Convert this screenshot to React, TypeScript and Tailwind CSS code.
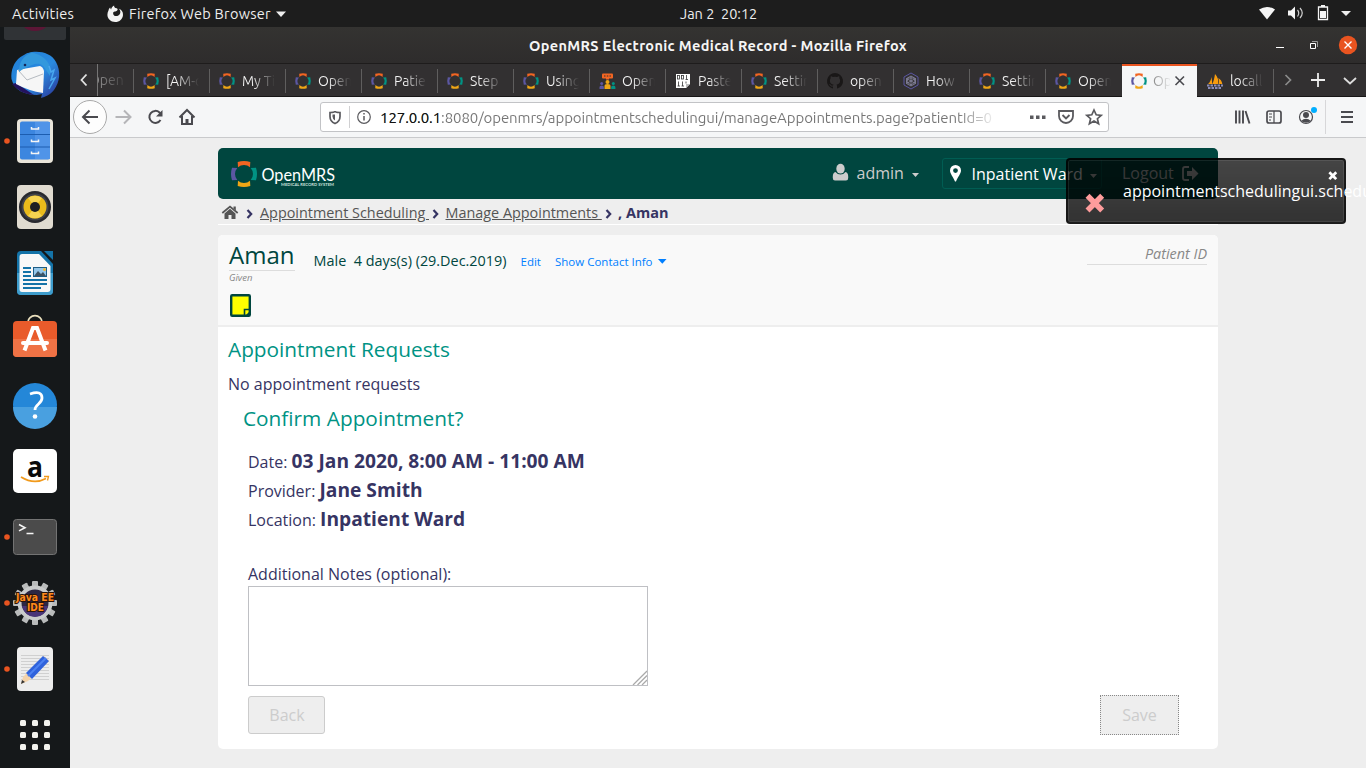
import React from "react";

type PicProps = { x: number; y: number; w: number; h: number; children: React.ReactNode; className?: string };

// An svg whose user units are window coordinates, so neighbouring icons share one grid.
function Pic({ x, y, w, h, children, className = "" }: PicProps) {
  return (
    <svg width={w} height={h} viewBox={`${x} ${y} ${w} ${h}`} className={`block shrink-0 ${className}`} fill="none">
      {children}
    </svg>
  );
}

const petal = "M-6 -6.700L-6.300 -12Q0 -14 6.300 -12L6 -6.700A9 9 0 0 0 -6 -6.700z";

function Ring({ cx, cy, scale = 1 }: { cx: number; cy: number; scale?: number }) {
  return (
    <g transform={`translate(${cx} ${cy}) scale(${scale})`}>
      <path d={petal} fill="#f26522" />
      <path d={petal} fill="#009384" transform="rotate(90)" />
      <path d={petal} fill="#eea616" transform="rotate(180)" />
      <path d={petal} fill="#5b57a2" transform="rotate(270)" />
    </g>
  );
}

function Favicon({ kind }: { kind: string }) {
  return (
    <Pic x={0} y={0} w={18} h={18}>
      {kind === "ring" && <Ring cx={9} cy={9} scale={0.6} />}
      {kind === "talk" && (
        <g>
          <rect x="4" y="1.500" width="11" height="5" rx="1" fill="#f26522" />
          <path d="M6 4h1.500M8.800 4h1.500M11.500 4H13" stroke="#323031" />
          <path d="M8 6h3v1.500H8z" fill="#f26522" />
          <circle cx="9.500" cy="10" r="2" fill="#eea616" />
          <path d="M6.500 17v-3q0-2 3-2t3 2v3z" fill="#eea616" />
          <circle cx="3.700" cy="11.500" r="1.500" fill="#5b57a2" />
          <path d="M1.500 17v-2q0-1.500 2.200-1.500t2.200 1.500v2z" fill="#5b57a2" />
          <circle cx="15.300" cy="11.500" r="1.500" fill="#009384" />
          <path d="M13.200 17v-2q0-1.500 2.100-1.500t2.100 1.500v2z" fill="#009384" />
        </g>
      )}
      {kind === "paste" && (
        <g>
          <path d="M2 2h14v10l-4 4H2z" fill="#fff" />
          <path d="M12 16v-4h4z" fill="#bbb" />
          <g stroke="#333" strokeWidth=".8">
            <rect x="3.500" y="3.500" width="2" height="3.500" />
            <rect x="7.500" y="3.500" width="2" height="3.500" />
            <path d="M12.500 3v4.500M11.500 7.500h2.500M4.500 9.500v4.500M3.500 14H6M8.500 9.500v4.500M7.500 14H10M12 9.500v2" />
          </g>
        </g>
      )}
      {kind === "github" && (
        <path
          d="M9 1a8 8 0 0 0-2.500 15.600c.4 0 .5-.2.5-.5v-1.500c-2.200.5-2.700-1-2.700-1-.4-.9-.9-1.200-.9-1.200-.7-.5 0-.5 0-.5.8.1 1.300.9 1.300.9.700 1.200 1.900.9 2.400.7 0-.5.3-.9.500-1.100-1.800-.2-3.700-.9-3.700-4 0-.9.300-1.600.8-2.100 0-.2-.3-1 .1-2.100 0 0 .7-.2 2.200.8a8 8 0 0 1 4 0c1.500-1 2.200-.8 2.200-.8.4 1.100.1 1.900.1 2.100.5.500.8 1.200.8 2.100 0 3.100-1.900 3.800-3.700 4 .3.200.600.7.600 1.500v2.200c0 .3.1.5.5.5A8 8 0 0 0 9 1z"
          fill="#191717"
        />
      )}
      {kind === "cube" && (
        <g stroke="#5b57a2" strokeWidth="1">
          <path d="M9 1l7 4v8l-7 4-7-4V5z" />
          <path d="M9 4l4.500 2.500v5L9 14l-4.500-2.500v-5zM9 4v10M4.500 6.500l9 5M13.500 6.500l-9 5M6 6l6 0 1 4-4 3-4-3z" stroke="#8b8aa5" strokeWidth=".8" />
        </g>
      )}
      {kind === "pma" && (
        <g>
          <path d="M6.500 12c1-3 2-6 2.500-10q4 4 3 10zM2 12c1.500-1 3-4 3.500-7l.8 7zM12.500 12c.6-2 .5-4-.2-6q3.500 2 4 6z" fill="#f89c0e" />
          <path d="M1 13.500h16M2 16h14" stroke="#8a8cb8" strokeWidth="1.800" strokeDasharray="2.500 1" />
        </g>
      )}
    </Pic>
  );
}

const tabs = [
  ["ring", "[AM-c"], ["ring", "My Ti"], ["ring", "Open"], ["ring", "Patie"], ["ring", "Step"], ["ring", "Using"],
  ["talk", "Open"], ["paste", "Paste"], ["ring", "Settin"], ["github", "open"], ["cube", "How"], ["ring", "Settin"], ["ring", "Open"],
];

function Tab({ kind, label, last = false }: { kind: string; label: string; last?: boolean }) {
  return (
    <div className="flex h-[33px] w-[76px] shrink-0 items-center">
      <div className={`h-6 w-px ${last ? "bg-transparent" : "bg-[#5f5e5e]"}`} />
      <div className="ml-2 w-[18px]"><Favicon kind={kind} /></div>
      <div className="ml-[6px] w-[33px] overflow-hidden whitespace-nowrap bg-linear-to-r from-[#f4f4f4] from-30% to-[#f4f4f4]/0 to-100% bg-clip-text text-[14px] leading-5 tracking-[-0.1px] text-transparent">
        {label}
      </div>
    </div>
  );
}

function TopBar() {
  return (
    <div className="flex h-[27px] shrink-0 items-center bg-[#1d1d1d] text-[14.500px] leading-[26px] text-[#eee]">
      <div className="w-[107px] pl-3 tracking-[0.270px]">Activities</div>
      <Pic x={107} y={4} w={18} h={18}>
        <path d="M108.500 9.500c.2-1.300.9-2.300 1.700-3 .1 1 .4 1.500.9 1.900.3-1.800 1.300-2.900 3-3.900-.1 1.300.4 1.900 1.300 2.600 4.300.6 1.300 3.400 0 3.400-.9 0-1.800.2-2.200.9-.5 1.900.9 3.700 3 3.700 2.600 0 4.400-2 4.100-4.500-.2-1.300-.9-2.300-1.900-3 3.200.9 4.800 3.500 4.600 6.300-.3 4-3.500 7.100-7.800 7.100-4.500 0-7.800-3.300-7.800-7.200 0-1.600.4-3 1.100-4.300z" fill="#f3f3f3" />
      </Pic>
      <div className="ml-[4px] w-[146px] whitespace-nowrap tracking-[0.290px]">Firefox Web Browser</div>
      <Pic x={275} y={8} w={12} h={10}><path d="M276 10.500h10l-5 5.500z" fill="#eee" /></Pic>
      <div className="ml-[393px] w-[120px] whitespace-pre">Jan 2  20:12</div>
      <Pic x={1254} y={4} w={112} h={20} className="ml-auto">
        <path d="M1259 9.500q8-5 16 0l-8 10z" fill="#f5f5f5" />
        <path d="M1288 10.500h3l4-4v13l-4-4h-3z" fill="#f5f5f5" />
        <path d="M1297.500 10q2.500 3 0 6.500M1300 8q4.500 5 0 10" stroke="#ccc" strokeWidth="1.200" />
        <path d="M1318.500 7h9v12.500h-9z" stroke="#f5f5f5" strokeWidth="1.300" />
        <path d="M1321 5h4v2h-4zM1320 11h6v7h-6z" fill="#f5f5f5" />
        <path d="M1341 11h10l-5 5z" fill="#eee" />
      </Pic>
    </div>
  );
}

function Dot({ y }: { y: number }) {
  return <circle cx="7" cy={y} r="2.800" fill="#e95420" />;
}

function DockCell({ y, children }: { y: number; children: React.ReactNode }) {
  return <Pic x={0} y={y - 33} w={70} h={66}>{children}</Pic>;
}

function Dock() {
  const teeth = Array.from({ length: 12 }, (_, i) => i * 30);
  return (
    <div className="flex w-[70px] shrink-0 flex-col bg-[#15181a]">
      <Pic x={0} y={27} w={70} h={15}>
        <rect x="4" y="10" width="62" height="30" rx="2" fill="#303336" />
        <path d="M24 27h22q-4 4-11 4t-11-4z" fill="#5c1636" />
      </Pic>
      <DockCell y={75}>
        <defs>
          <linearGradient id="bird" x1="0" y1="0" x2="1" y2="1">
            <stop offset="0" stopColor="#1f7fd6" /><stop offset=".55" stopColor="#2a8ae0" /><stop offset="1" stopColor="#2b2e91" />
          </linearGradient>
        </defs>
        <path d="M28 53c9-3 23-1 28 9 5 9 4 20-2 28-4 5-9 7-13 8l1-4-5 1C25 95 14 90 11.500 79c-1-8 2-17 9-22 3-2 5-3 7-4z" fill="url(#bird)" />
        <path d="M12 84q8 10 22 11l-18-12z" fill="#24125e" />
        <path d="M17 70l23-4q3 1 4 5l-1 22q-14-2-27-9z" fill="#f6f6f6" />
        <path d="M18 70l9 10 16-6" stroke="#b5bac0" />
        <path d="M29 52c4 1 11 2 16 7 5 5 6 9 5 17l-4-6c-4-7-8-7-14-5-5 2-10 4-13 7 0-10 4-16 12-19z" fill="#3398dd" />
        <path d="M49 66l2 6 3-2-3 10 4-2-6 11" stroke="#49a7ee" strokeWidth="1.500" />
        <circle cx="25" cy="65" r="1.300" fill="#15265a" />
      </DockCell>
      <DockCell y={141}>
        <Dot y={141} />
        <rect x="17" y="119" width="36" height="44" rx="4" fill="#e9e5da" />
        <rect x="20" y="121.500" width="30" height="38" rx="2" fill="#3c86df" />
        <path d="M35 122h15v37H35z" fill="#5094e8" />
        <path d="M20 134.500h30M20 147h30" stroke="#1c5db0" />
        <path d="M31.500 127v2h7v-2M31.500 139.500v2h7v-2M31.500 151.500v2h7v-2" stroke="#f5f5f5" strokeWidth="1.500" />
      </DockCell>
      <DockCell y={207}>
        <rect x="17" y="185" width="36" height="44" rx="4" fill="#e0dbd0" />
        <circle cx="35" cy="207" r="16" fill="#28292e" />
        <circle cx="35" cy="207" r="13.500" fill="#41434a" />
        <circle cx="35" cy="207" r="11.500" fill="#eabb1b" />
        <path d="M35 207l-7-9q7-4.500 14 0zM35 207l-7 9q7 4.500 14 0z" fill="#f6d451" />
        <circle cx="35" cy="207" r="5" fill="#1e2023" />
      </DockCell>
      <DockCell y={273}>
        <path d="M21 251h20l12 13v27q0 4-4 4H21q-4 0-4-4v-36q0-4 4-4z" fill="#1473a8" />
        <path d="M17 273h36v18q0 4-4 4H21q-4 0-4-4z" fill="#3e9ccc" />
        <path d="M22 254h17l11.500 12v23q0 3-3 3H22q-2.500 0-2.500-3v-32q0-3 2.500-3z" fill="#f8f8f8" />
        <path d="M44 251h9v9z" fill="#1473a8" />
        <path d="M23 268h8M23 272h8M23 276h8M23 280h24M23 284h24M23 288h18" stroke="#1473a8" strokeWidth="1.800" />
        <rect x="33.500" y="267.500" width="13" height="9" fill="#94c7ea" stroke="#1e5d85" />
        <path d="M34 276l4-5 3 3 2-2 3 4z" fill="#3d5363" /><circle cx="44.500" cy="269.500" r="1.500" fill="#f4b631" />
      </DockCell>
      <DockCell y={339}>
        <path d="M28 323v-1a7 6.300 0 0 1 14 0v1" stroke="#eadfbd" strokeWidth="1.800" />
        <rect x="13" y="321" width="44" height="36" rx="4" fill="#e95b2b" />
        <path d="M13 339h44v14q0 4-4 4H17q-4 0-4-4z" fill="#ef7245" />
        <path d="M24.500 350.500L33 328h4l8.500 22.500" stroke="#fff" strokeWidth="4" />
        <rect x="21" y="341" width="28" height="4" rx="2" fill="#fff" />
      </DockCell>
      <DockCell y={405}>
        <circle cx="35" cy="405" r="22" fill="#2487d8" />
        <path d="M13 407a22 22 0 0 0 44 0z" fill="#49a0e0" />
        <path d="M30 394q12-4 12 4c0 6-7 6-7 12" stroke="#fff" strokeWidth="2.800" />
        <circle cx="35" cy="416.500" r="2.300" fill="#fff" />
      </DockCell>
      <DockCell y={471}>
        <rect x="13" y="449" width="44" height="44" rx="5" fill="#fff" />
        <text x="27" y="476.500" fontFamily="Open Sans" fontWeight="700" fontSize="29" fill="#0b0b0b" textLength="16" lengthAdjust="spacingAndGlyphs">a</text>
        <path d="M21 477q13 8 25 1.500" stroke="#f19a1c" strokeWidth="1.700" />
        <path d="M44 476.500h4.500l-1 4" stroke="#f19a1c" strokeWidth="1.300" />
      </DockCell>
      <DockCell y={537}>
        <Dot y={537} />
        <rect x="13.500" y="519.500" width="43" height="35" rx="3" fill="#4b4b4b" stroke="#737373" />
        <path d="M19 524.500l6 3.200-6 3.200M26.500 533.500h7" stroke="#f5f5f5" strokeWidth="1.600" />
      </DockCell>
      <DockCell y={603}>
        <Dot y={603} />
        <g fill="#b9bbbb">
          {teeth.map((a) => <rect key={a} x="32" y="581" width="6" height="9" rx="1" transform={`rotate(${a} 35 603)`} />)}
        </g>
        <circle cx="35" cy="603" r="15.500" stroke="#c9cbcb" strokeWidth="4" fill="#2c2643" />
        <path d="M22 606h26q-3 11-13 11t-13-11z" fill="#493478" />
        <g fontFamily="DejaVu Sans" fontWeight="700" fontSize="10" fill="#ff8a1c" stroke="#29130a" strokeWidth="2" paintOrder="stroke">
          <text x="16" y="601" textLength="38" lengthAdjust="spacingAndGlyphs">Java EE</text>
          <text x="27" y="611" textLength="17" lengthAdjust="spacingAndGlyphs">IDE</text>
        </g>
      </DockCell>
      <DockCell y={669}>
        <Dot y={669} />
        <rect x="17" y="647" width="36" height="44" rx="4" fill="#ededed" />
        <path d="M21 655.500h28M21 658.500h28M21 661.500h28M21 664.500h28M21 667.500h28M21 670.500h28M21 673.500h28M21 676.500h28M21 679.500h28" stroke="#c8c8c8" strokeWidth=".8" />
        <path d="M21 684l2-7 21-21 5 5-21 20z" fill="#f3d3ab" />
        <path d="M26 673l17-17 6 5-17 18z" fill="#2f62dc" />
        <path d="M28 676l18-18" stroke="#4c82f2" strokeWidth="2" />
        <path d="M21 684l1-4 3 2z" fill="#333" />
      </DockCell>
      <DockCell y={735}>
        {[723, 735, 747].map((y) => [23, 35, 47].map((x) => <rect key={`${x}-${y}`} x={x - 3} y={y - 3} width="6" height="6" rx="1.500" fill="#f2f2ee" />))}
      </DockCell>
    </div>
  );
}

function TitleBar() {
  return (
    <div className="flex h-9 shrink-0 items-center bg-linear-to-b from-[#343331] to-[#2e2c2c]">
      <div className="w-[96px]" />
      <div className="flex-1 pt-px text-center text-[14.500px] font-bold tracking-[0.340px] text-[#f5f5f5]">OpenMRS Electronic Medical Record - Mozilla Firefox</div>
      <Pic x={1270} y={27} w={96} h={36}>
        <path d="M1276 47.500h8" stroke="#fff" />
        <path d="M1310.500 43.500h5v5h-5z" stroke="#fff" />
        <path d="M1312 41.500h5.500v5.500" stroke="#999" />
        <circle cx="1348" cy="45" r="9.200" fill="#e95420" />
        <path d="M1344.500 41.500l7 7m0-7l-7 7" stroke="#fff" strokeWidth="1.400" />
      </Pic>
    </div>
  );
}

function TabStrip() {
  return (
    <div className="flex h-[34px] shrink-0 border-y border-t-[#1e1c1c] border-b-[#171616] bg-[#323031]">
      <div className="w-[28px] border-r border-[#767575]">
        <Pic x={70} y={64} w={27} h={32}><path d="M86.500 74.500l-5 5.500 5 5.500" stroke="#e3e3e3" strokeWidth="1.800" /></Pic>
      </div>
      <div className="mt-[6px] w-[35px] shrink-0 overflow-hidden bg-linear-to-r from-white/45 to-white/5 to-80% bg-clip-text text-[14px] leading-5 text-transparent">
        <span className="-ml-[9px]">Open</span>
      </div>
      {tabs.map(([kind, label], i) => <Tab key={i} kind={kind} label={label} />)}
      <div className="-mb-px ml-px flex h-[33px] w-[75px] shrink-0 items-center border-t-2 border-[#e95420] bg-[#f5f6f7] pb-[2px]">
        <div className="ml-2 w-[18px]"><Favicon kind="ring" /></div>
        <div className="ml-[5px] w-[17px] overflow-hidden whitespace-nowrap bg-linear-to-r from-[#888] to-[#999]/10 bg-clip-text text-[14px] leading-5 text-transparent">Op</div>
        <Pic x={1170} y={71} w={20} h={20}><path d="M1175.500 76.500l8.500 8.500m0-8.500l-8.500 8.500" stroke="#4a4a4f" strokeWidth="1.600" /></Pic>
      </div>
      <Tab kind="pma" label="locall" last />
      <Pic x={1273} y={64} w={93} h={32}>
        <path d="M1273.500 69v24" stroke="#5f5e5e" />
        <path d="M1285.500 75l5 5-5 5" stroke="#8b8b8b" strokeWidth="1.700" />
        <path d="M1311 80h14M1318 73v14" stroke="#eee" strokeWidth="1.800" />
        <path d="M1344 78l6 5.500 6-5.500" stroke="#ddd" strokeWidth="1.800" />
      </Pic>
    </div>
  );
}

function NavBar() {
  return (
    <div className="flex h-[41px] shrink-0 items-center border-b border-[#c9cacc] bg-[#f5f6f7]">
      <Pic x={70} y={97} w={250} h={40}>
        <circle cx="90" cy="117" r="16.500" fill="#fdfdfd" stroke="#a9a9a9" />
        <g strokeWidth="2">
          <path d="M98 117H83M89.500 110.500L83 117l6.500 6.500" stroke="#4a4a4f" />
          <path d="M115.500 117H130M124 110.500l6.500 6.500-6.500 6.500" stroke="#b5b5b8" />
          <path d="M160.500 120a6 6 0 1 1-1-7.500l1.500 1.500" stroke="#4a4a4f" />
          <path d="M162.500 110v6.500H156z" fill="#4a4a4f" />
          <path d="M179.500 117.500l7.500-7.500 7.500 7.500M182 116v8h10v-8" stroke="#4a4a4f" />
          <path d="M187 119v4" stroke="#4a4a4f" strokeWidth="3" />
        </g>
      </Pic>
      <div className="flex h-[30px] w-[789px] items-center rounded-[3px] border border-[#c2c3c6] bg-white">
        <Pic x={321} y={103} w={59} h={28}>
          <path d="M330 112.500q5 0 5-1.500 0 1.500 5 1.500v4q0 5-5 7-5-2-5-7z" stroke="#5a5a5e" strokeWidth="1.700" />
          <path d="M332.500 114.500h2.500v6q-2.500-1.500-2.500-4z" fill="#5a5a5e" />
          <path d="M349.500 106v22" stroke="#d0d0d2" />
          <circle cx="364" cy="117" r="6.300" stroke="#5a5a5e" strokeWidth="1.200" />
          <path d="M364 116v4.500M364 113v1.600" stroke="#5a5a5e" strokeWidth="1.500" />
        </Pic>
        <div className="w-[614px] overflow-hidden whitespace-nowrap bg-linear-to-r from-[#757575] from-94% to-[#757575]/10 bg-clip-text pt-px text-[15px] leading-6 tracking-[-0.085px] text-transparent">
          <span className="text-[#111]">127.0.0.1</span>:8080/openmrs/appointmentschedulingui/manageAppointments.page?patientId=0
        </div>
        <Pic x={994} y={103} w={114} h={28}>
          <path d="M1030 117.200h3.500M1036 117.200h3.500M1042 117.200h3.500" stroke="#5a5a5e" strokeWidth="3.400" />
          <path d="M1059 111h14v5a7 7 0 0 1-14 0z" stroke="#5a5a5e" strokeWidth="1.800" />
          <path d="M1062.500 115l3.500 3.500 3.500-3.500" stroke="#5a5a5e" strokeWidth="1.900" />
          <path d="M1094 110l2.200 4.800 5 .5-3.800 3.400 1.200 5-4.600-2.700-4.600 2.700 1.200-5-3.800-3.400 5-.5z" stroke="#5a5a5e" strokeWidth="1.700" />
        </Pic>
      </div>
      <Pic x={1109} y={97} w={257} h={40}>
        <path d="M1236 110.500v13M1239.500 110.500v13M1243 110.500v13M1245.500 111l4 12.500" stroke="#4a4a4f" strokeWidth="1.900" />
        <rect x="1267" y="111" width="14" height="12" rx="2" stroke="#4a4a4f" strokeWidth="1.700" />
        <path d="M1274 111v12M1269 114h3M1269 117h3M1269 120h2" stroke="#4a4a4f" strokeWidth="1.200" />
        <circle cx="1306" cy="117" r="6.500" stroke="#4a4a4f" strokeWidth="1.200" />
        <circle cx="1306" cy="115" r="3" fill="#4a4a4f" />
        <path d="M1301 121q5-4.500 10 0-5 3.500-10 0z" fill="#4a4a4f" />
        <circle cx="1314" cy="110" r="3" fill="#00aeff" />
        <path d="M1325.500 100v34" stroke="#d7d7d9" />
        <path d="M1341 112h12M1341 117h12M1341 122h12" stroke="#4a4a4f" strokeWidth="1.800" />
      </Pic>
    </div>
  );
}

function PageHeader() {
  return (
    <div className="flex h-[51px] items-center rounded-[5px] bg-[#00463f] text-[16px] text-[#ccc]">
      <Pic x={218} y={148} w={140} h={51}>
        <Ring cx={244} cy={174} />
        <text x="261.500" y="180.500" fontFamily="Lato" fontSize="17.500" fill="#fff" textLength="73.500" lengthAdjust="spacingAndGlyphs">OpenMRS</text>
        <text x="281" y="185.700" fontFamily="Lato" fontWeight="700" fontSize="3.500" fill="#cde0de" textLength="53" lengthAdjust="spacingAndGlyphs">MEDICAL RECORD SYSTEM</text>
      </Pic>
      <Pic x={828} y={160} w={28} h={28} className="ml-[470px]">
        <ellipse cx="840.500" cy="168.700" rx="4.200" ry="4.900" fill="#ccc" />
        <path d="M835.500 172q2 2.500 5 2.500t5-2.500q2.700.7 2.700 4.500v1.500q0 2.500-2.200 2.500h-11q-2.200 0-2.200-2.500v-1.500q0-3.800 2.700-4.500z" fill="#ccc" />
      </Pic>
      <div className="w-[55px] pb-[2px] pl-[0.500px]">admin</div>
      <Pic x={911} y={168} w={31} h={14}><path d="M912 174h7l-3.500 4z" fill="#ccc" /></Pic>
      <div className="flex h-[31px] w-[160px] items-center rounded-[3px] border border-[#005d53] text-white">
        <Pic x={943} y={160} w={28} h={28}>
          <path fillRule="evenodd" d="M955.500 165a5.500 5.500 0 0 1 5.500 5.500c0 3-3.500 7-5 11h-1c-1.500-4-5-8-5-11a5.500 5.500 0 0 1 5.500-5.500zm0 3.200a2.400 2.400 0 1 0 0 4.800 2.400 2.400 0 0 0 0-4.800z" fill="#fff" />
        </Pic>
        <div className="w-[118px] whitespace-nowrap pl-[0.500px] pt-px">Inpatient Ward</div>
        <Pic x={1089} y={168} w={10} h={14}><path d="M1090 175h7l-3.500 4z" fill="#ccc" /></Pic>
      </div>
      <div className="ml-5 w-[58px] pb-[2px]">Logout</div>
      <Pic x={1180} y={163} w={20} h={18}>
        <path d="M1189 165h-4q-2 0-2 2v9q0 2 2 2h4" stroke="#ccc" strokeWidth="1.800" />
        <path d="M1187 169h5v-4l6.500 6.500-6.500 6.500v-4h-5z" fill="#ccc" />
      </Pic>
    </div>
  );
}

function Chevron() {
  return (
    <Pic x={0} y={0} w={8} h={12} className="mt-[3px]"><path d="M1.500 2l3.700 4-3.700 4" stroke="#363463" strokeWidth="2.200" /></Pic>
  );
}

function Breadcrumbs() {
  return (
    <div className="flex h-[26px] items-center border-b-[1.500px] border-white pt-px text-[14.400px] text-[#555]">
      <Pic x={218} y={200} w={28} h={22}>
        <path d="M222.300 212l7.700-6.400 7.700 6.400" stroke="#555" strokeWidth="1.800" />
        <path d="M233.500 205.500h2.300v4l-2.300-2z" fill="#555" />
        <path d="M224.500 212.500l5.500-4.700 5.500 4.700v5.500h-4v-4h-3v4h-4z" fill="#555" />
      </Pic>
      <Chevron />
      <a className="ml-[6px] mt-[2px] w-[172px] whitespace-pre underline">Appointment Scheduling </a>
      <Chevron />
      <a className="ml-[5.500px] mt-[2px] w-[159.500px] whitespace-pre underline">Manage Appointments </a>
      <Chevron />
      <b className="ml-[5px] mt-[2px] whitespace-nowrap text-[14.500px] font-bold text-[#363463]">, Aman</b>
    </div>
  );
}

function PatientHeader() {
  return (
    <div className="flex h-[92px] items-start rounded-t-[5px] border-b-2 border-[#eee] bg-[#f9f9f9] text-[#00463f]">
      <div className="ml-[11px] flex w-[84px] flex-col">
        <div className="flex h-[36px] w-[66px] items-end whitespace-nowrap border-b border-[#ddd] text-[24px] leading-[30px]">Aman</div>
        <div className="h-[23px] text-[9.500px] italic leading-[13px] text-[#888]">Given</div>
        <Pic x={229} y={294} w={24} h={24}>
          <rect x="231.200" y="295.200" width="18.600" height="20.600" rx="1" fill="#ff0" stroke="#00463f" strokeWidth="2.400" />
          <path d="M244.500 316v-6.500h6" stroke="#00463f" strokeWidth="1.600" />
          <path d="M246 315l4-4v4z" fill="#00463f" />
        </Pic>
      </div>
      <div className="mt-[14px] w-[207px] whitespace-pre pl-[0.600px] text-[14.400px] leading-6">Male  4 days(s) (29.Dec.2019)</div>
      <div className="mt-[15px] w-[35px] pl-[0.500px] text-[11.500px] leading-6 text-[#007fff]">Edit</div>
      <div className="mt-[15px] w-[102px] whitespace-nowrap text-[11.500px] leading-6 text-[#007fff]">Show Contact Info</div>
      <Pic x={657} y={255} w={12} h={12} className="mt-5"><path d="M658 259h8.500l-4.200 4.800z" fill="#007fff" /></Pic>
      <div className="ml-auto mr-[11px] mt-2 h-[22px] w-[120px] border-b border-[#ddd] text-right text-[14.400px] italic leading-[21px] text-[#888]">Patient ID</div>
    </div>
  );
}

function Detail({ label, value }: { label: string; value: string }) {
  return (
    <div className="h-[29px] whitespace-nowrap leading-[29px]">
      {label}: <b className="text-[19.200px] font-bold">{value}</b>
    </div>
  );
}

function Toast() {
  return (
    <div className="absolute left-[996px] top-[20px] flex h-[66px] w-[280px] rounded-[4px] border-2 border-black/60 bg-linear-to-b from-black/71 to-black/79 text-[16px] text-white shadow-[inset_0_0_0_1px_rgba(255,255,255,0.08)]">
      <Pic x={1068} y={160} w={55} h={62}>
        <path d="M1089.500 197.800l10.700 10.700m0-10.700l-10.700 10.700" stroke="#fe9c9c" strokeWidth="5.600" strokeLinecap="square" />
      </Pic>
      <div className="mt-[19px] w-[205px] whitespace-nowrap leading-6">appointmentschedulingui.scheduleAppointment</div>
      <Pic x={1328} y={160} w={14} h={62}>
        <path d="M1330.300 173.200l5 5m0-5l-5 5" stroke="#fff" strokeWidth="2.700" strokeLinecap="square" />
      </Pic>
    </div>
  );
}

export default function App() {
  return (
    <div className="flex h-[768px] w-[1366px] flex-col overflow-hidden font-['Ubuntu','Noto_Sans',sans-serif]">
      <TopBar />
      <div className="flex min-h-0 flex-1">
        <Dock />
        <div className="flex w-[1296px] flex-col overflow-hidden">
          <TitleBar />
          <TabStrip />
          <NavBar />
          <div className="relative flex-1 overflow-hidden bg-[#eee] pl-[148px] pt-[10px] font-['Open_Sans',sans-serif]">
            <div className="w-[1000px]">
              <PageHeader />
              <Breadcrumbs />
              <div className="mt-[10px] h-[514px] rounded-[5px] bg-white text-[16px] text-[#363463]">
                <PatientHeader />
                <h2 className="ml-[10px] mt-[7px] text-[20.800px] leading-[30px] text-[#009384]">Appointment Requests</h2>
                <p className="ml-[10px] mt-[8px] leading-6">No appointment requests</p>
                <h2 className="ml-[25px] mt-[7px] text-[20.800px] leading-[30px] text-[#009384]">Confirm Appointment?</h2>
                <div className="ml-[30px] mt-[13px]">
                  <Detail label="Date" value="03 Jan 2020, 8:00 AM - 11:00 AM" />
                  <Detail label="Provider" value="Jane Smith" />
                  <Detail label="Location" value="Inpatient Ward" />
                  <p className="mt-[29px] leading-6">Additional Notes (optional):</p>
                  <div className="flex h-[100px] w-[400px] items-end justify-end border border-[#bfc0c4] bg-white">
                    <Pic x={632} y={669} w={15} h={16}><path d="M633 685l14-14M637.500 685l9.500-9.500M642 685l5-5" stroke="#aaa" strokeWidth="1.300" /></Pic>
                  </div>
                  <div className="mr-[39px] mt-[10px] flex items-start justify-between text-[#ccc]">
                    <button className="h-[38px] w-[77px] rounded-[3px] border border-[#ccc] bg-[#eee] pl-px">Back</button>
                    <button className="-mt-px h-[40px] w-[79px] border border-dotted border-[#888] bg-[#eee]">Save</button>
                  </div>
                </div>
              </div>
            </div>
            <Toast />
          </div>
        </div>
      </div>
    </div>
  );
}
